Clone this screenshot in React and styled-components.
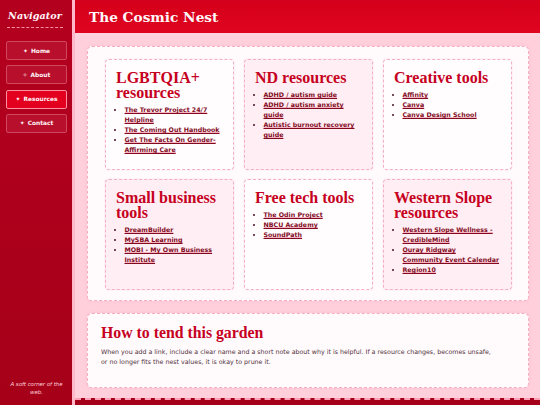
import React from 'react';
import styled, { createGlobalStyle } from 'styled-components';

const GlobalStyle = createGlobalStyle`
  html, body {
    margin: 0;
    padding: 0;
    height: 100%;
    overflow: hidden;
  }
  body {
    font-family: "DejaVu Sans", Verdana, sans-serif;
    background: #ffd0dc;
  }
`;

const Shell = styled.div`
  display: grid;
  grid-template-columns: 75px 1fr;
  height: 100vh;
`;

const Sidebar = styled.aside`
  display: flex;
  flex-direction: column;
  align-items: stretch;
  background: linear-gradient(180deg, #b4001f 0%, #a60019 100%);
  border-right: 3px solid #ffb9ca;
  padding: 10px 5px 9px 6px;
  box-sizing: border-box;
  height: 100vh;
`;

const Brand = styled.div`
  font-family: "DejaVu Serif", Georgia, serif;
  font-style: italic;
  font-weight: bold;
  font-size: 9.6px;
  letter-spacing: 0.1px;
  color: #fff4f7;
  text-align: center;
  padding-bottom: 6px;
  margin: 0 4px 13px 1px;
  border-bottom: 1px dashed #ff8fa8;
`;

const NavList = styled.nav`
  display: flex;
  flex-direction: column;
  gap: 5.3px;
`;

const NavButton = styled.a`
  display: flex;
  align-items: center;
  justify-content: center;
  gap: 3px;
  height: 19px;
  box-sizing: border-box;
  border-radius: 2px;
  border: 1px solid ${(p) => (p.$active ? '#ff8da4' : '#d1475f')};
  background: ${(p) => (p.$active ? '#e3001f' : '#b8102c')};
  color: #fff3f6;
  font-size: 5.9px;
  font-weight: bold;
  text-decoration: none;
`;

const SideNote = styled.p`
  margin: auto 0 0;
  font-size: 5.4px;
  font-style: italic;
  color: #ffd5de;
  text-align: center;
  line-height: 7.5px;
`;

const Main = styled.main`
  display: flex;
  flex-direction: column;
  background: linear-gradient(180deg, #ffe3ea 0px, #ffd0dc 40px, #ffd0dc 100%);
  min-height: 0;
`;

const Header = styled.header`
  height: 33px;
  flex-shrink: 0;
  display: flex;
  align-items: center;
  padding-left: 14px;
  background: linear-gradient(180deg, #d5001b 0%, #df041f 100%);
  font-family: "DejaVu Serif", Georgia, serif;
  font-weight: bold;
  font-size: 13.7px;
  color: #fff6f8;
`;

const Content = styled.div`
  display: flex;
  flex-direction: column;
  gap: 12px;
  padding: 13px 11px 10px 12px;
`;

const Panel = styled.section`
  background: #fffbfd;
  border: 1px dashed #f5aec2;
  border-radius: 5px;
  box-shadow: 0 0 3px rgba(255, 160, 185, 0.45);
  padding: ${(p) => p.$pad};
`;

const CardGrid = styled.div`
  display: grid;
  grid-template-columns: repeat(3, 1fr);
  column-gap: 10px;
  row-gap: 9px;
`;

const Card = styled.div`
  height: 111px;
  box-sizing: border-box;
  border: 1px dashed #f3b0c2;
  border-radius: 4px;
  padding: 10px 9px 8px 10px;
  background: #fffdfe;
  box-shadow: 0 0 2px rgba(255, 170, 192, 0.35);
  &:nth-child(even) {
    background: #ffeef3;
  }
`;

const CardTitle = styled.h2`
  margin: 0 0 5px;
  font-family: "Liberation Serif", "Times New Roman", serif;
  font-weight: bold;
  font-size: 16px;
  line-height: 15px;
  color: #c6001e;
`;

const LinkList = styled.ul`
  margin: 0;
  padding-left: 8.5px;
  list-style: disc;
  color: #4a1020;
  font-size: 6.3px;
  line-height: 10px;
  li::marker {
    font-size: 6px;
  }
`;

const ResLink = styled.a`
  color: #820a1d;
  font-weight: bold;
  text-decoration: underline;
  text-decoration-thickness: 1px;
  text-underline-offset: 1px;
  box-shadow: inset 0 -1px 0 #f7b3c4;
`;

const TendTitle = styled.h2`
  margin: 0 0 5px;
  font-family: "Liberation Serif", "Times New Roman", serif;
  font-weight: bold;
  font-size: 15.8px;
  line-height: 18px;
  color: #c6001e;
`;

const TendText = styled.p`
  margin: 0;
  max-width: 392px;
  font-size: 6.3px;
  line-height: 10px;
  color: #4f3039;
`;

const Footer = styled.footer`
  margin-top: auto;
  height: 30px;
  flex-shrink: 0;
  background: #a5001a;
  border-top: 2px dashed #ff9fb5;
`;

const nav = [
  { icon: '✦', label: 'Home' },
  { icon: '✧', label: 'About' },
  { icon: '✦', label: 'Resources', active: true },
  { icon: '✦', label: 'Contact' },
];

const cards = [
  {
    title: 'LGBTQIA+ resources',
    links: ['The Trevor Project 24/7 Helpline', 'The Coming Out Handbook', 'Get The Facts On Gender-Affirming Care'],
  },
  {
    title: 'ND resources',
    links: ['ADHD / autism guide', 'ADHD / autism anxiety guide', 'Autistic burnout recovery guide'],
  },
  {
    title: 'Creative tools',
    links: ['Affinity', 'Canva', 'Canva Design School'],
  },
  {
    title: 'Small business tools',
    links: ['DreamBuilder', 'MySBA Learning', 'MOBI - My Own Business Institute'],
  },
  {
    title: 'Free tech tools',
    links: ['The Odin Project', 'NBCU Academy', 'SoundPath'],
  },
  {
    title: 'Western Slope resources',
    links: ['Western Slope Wellness - CredibleMind', 'Ouray Ridgway Community\u00a0Event Calendar', 'Region10'],
  },
];

const App = () => {
  return (
    <>
      <GlobalStyle />
      <Shell>
        <Sidebar>
          <Brand>Navigator</Brand>
          <NavList>
            {nav.map((n) => (
              <NavButton key={n.label} href="#" $active={n.active}>
                <span>{n.icon}</span>
                <span>{n.label}</span>
              </NavButton>
            ))}
          </NavList>
          <SideNote>A soft corner of the web.</SideNote>
        </Sidebar>
        <Main>
          <Header>The Cosmic Nest</Header>
          <Content>
            <Panel $pad="12px 16px 10px 17px">
              <CardGrid>
                {cards.map((c) => (
                  <Card key={c.title}>
                    <CardTitle>{c.title}</CardTitle>
                    <LinkList>
                      {c.links.map((l) => (
                        <li key={l}>
                          <ResLink href="#">{l}</ResLink>
                        </li>
                      ))}
                    </LinkList>
                  </Card>
                ))}
              </CardGrid>
            </Panel>
            <Panel $pad="10px 13px 20px 13px">
              <TendTitle>How to tend this garden</TendTitle>
              <TendText>
                When you add a link, include a clear name and a short note about why it is helpful. If a resource
                changes, becomes unsafe, or no longer fits the nest values, it is okay to prune it.
              </TendText>
            </Panel>
          </Content>
          <Footer />
        </Main>
      </Shell>
    </>
  );
};

export default App;
